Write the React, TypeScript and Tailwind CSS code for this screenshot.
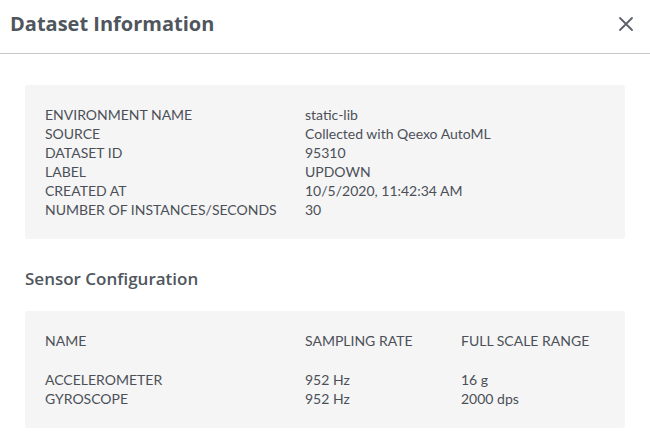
import React from "react";

const info: [string, string][] = [
  ["ENVIRONMENT NAME", "static-lib"],
  ["SOURCE", "Collected with Qeexo AutoML"],
  ["DATASET ID", "95310"],
  ["LABEL", "UPDOWN"],
  ["CREATED AT", "10/5/2020, 11:42:34 AM"],
  ["NUMBER OF INSTANCES/SECONDS", "30"],
];

const sensors: [string, string, string][] = [
  ["ACCELEROMETER", "952 Hz", "16 g"],
  ["GYROSCOPE", "952 Hz", "2000 dps"],
];

const body = { fontFamily: "Lato, 'Open Sans', sans-serif" };
const head = { fontFamily: "'Open Sans', Lato, sans-serif" };

export default function App() {
  return (
    <div className="w-[650px] h-[446px] bg-white text-[#4b5058] overflow-hidden">
      <div className="h-[54px] flex items-center justify-between pl-[10px] pr-[16px] border-b border-[#c4c6c9]">
        <h1 className="text-[20px] font-bold text-[#50565d] leading-none -mt-[6px]" style={head}>
          Dataset Information
        </h1>
        <button className="text-[#5c6168] -mt-[6px]">
          <svg width="16" height="16" viewBox="0 0 16 16" fill="none" stroke="currentColor" strokeWidth="1.8" strokeLinecap="round">
            <path d="M2 2L14 14M14 2L2 14" />
          </svg>
        </button>
      </div>
      <div className="px-[25px] pt-[31px]">
        <div className="bg-[#f5f5f5] rounded-[3px] px-[20px] py-[20px] text-[14px] leading-[19px]" style={body}>
          {info.map(([k, v]) => (
            <div key={k} className="flex">
              <div className="w-[260px]">{k}</div>
              <div>{v}</div>
            </div>
          ))}
        </div>
        <h2 className="text-[17px] font-semibold text-[#50565d] mt-[29px] leading-[22px]" style={head}>
          Sensor Configuration
        </h2>
        <div className="bg-[#f5f5f5] rounded-[3px] px-[20px] py-[20px] mt-[21px] text-[14px] leading-[19px]" style={body}>
          <div className="flex">
            <div className="w-[260px]">NAME</div>
            <div className="w-[156px]">SAMPLING RATE</div>
            <div>FULL SCALE RANGE</div>
          </div>
          <div className="mt-[20px]">
            {sensors.map(([n, r, s]) => (
              <div key={n} className="flex">
                <div className="w-[260px]">{n}</div>
                <div className="w-[156px]">{r}</div>
                <div>{s}</div>
              </div>
            ))}
          </div>
        </div>
      </div>
    </div>
  );
}
